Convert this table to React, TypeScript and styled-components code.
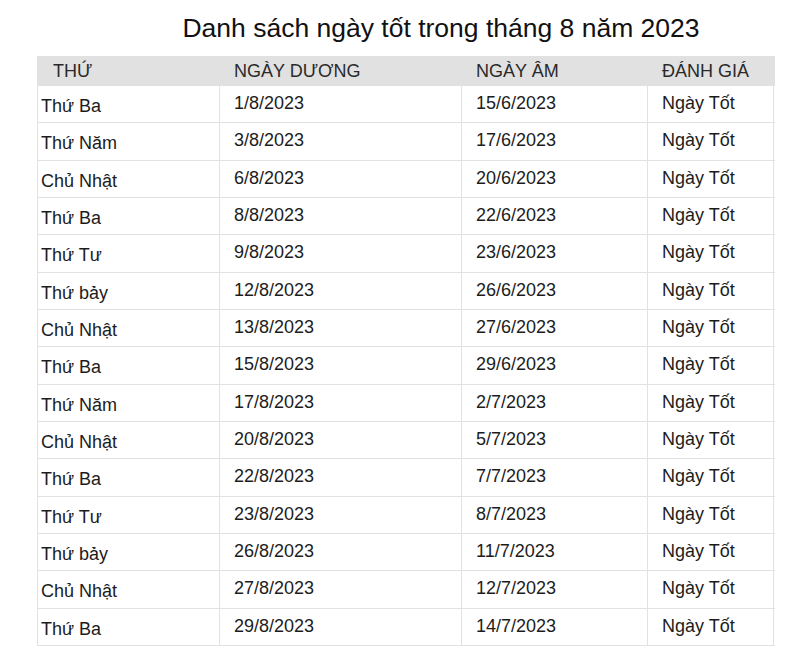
import React from "react";
import styled, { createGlobalStyle } from "styled-components";

const Global = createGlobalStyle`
  html, body { margin: 0; padding: 0; background: #ffffff; }
  body { font-family: "Liberation Sans", Arial, sans-serif; color: #1c1c1c; }
`;

const Page = styled.div`
  width: 800px;
  height: 659px;
  padding-top: 13px;
  box-sizing: border-box;
  overflow: hidden;
`;

const Title = styled.h1`
  margin: 0 0 12px 0;
  padding-left: 82px;
  text-align: center;
  font-weight: 400;
  font-size: 26.5px;
  line-height: 31px;
  color: #111;
`;

const Table = styled.div`
  margin-left: 37px;
  width: 737px;
  display: grid;
  grid-template-columns: 182px 242px 186px 127px;
  border-left: 1px solid #e2e2e2;
  border-right: 1px solid #e2e2e2;
  box-sizing: border-box;
`;

const Head = styled.div<{ $pad: number }>`
  height: 30px;
  background: #e1e1e1;
  padding-left: ${(p) => p.$pad}px;
  font-size: 18px;
  line-height: 31px;
  color: #2a2a2a;
  white-space: nowrap;
`;

const Row = styled.div`
  display: contents;
`;

const Cell = styled.div<{ $first?: boolean; $last?: boolean }>`
  height: 37.33px;
  box-sizing: border-box;
  border-bottom: 1px solid #e2e2e2;
  border-right: ${(p) => (p.$last ? "none" : "1px solid #e2e2e2")};
  padding-left: ${(p) => (p.$first ? 3 : 14)}px;
  padding-top: ${(p) => (p.$first ? 10 : 7)}px;
  font-size: 18px;
  line-height: 20px;
  white-space: nowrap;
  color: #1c1c1c;
`;

const rows: [string, string, string][] = [
  ["Thứ Ba", "1/8/2023", "15/6/2023"],
  ["Thứ Năm", "3/8/2023", "17/6/2023"],
  ["Chủ Nhật", "6/8/2023", "20/6/2023"],
  ["Thứ Ba", "8/8/2023", "22/6/2023"],
  ["Thứ Tư", "9/8/2023", "23/6/2023"],
  ["Thứ bảy", "12/8/2023", "26/6/2023"],
  ["Chủ Nhật", "13/8/2023", "27/6/2023"],
  ["Thứ Ba", "15/8/2023", "29/6/2023"],
  ["Thứ Năm", "17/8/2023", "2/7/2023"],
  ["Chủ Nhật", "20/8/2023", "5/7/2023"],
  ["Thứ Ba", "22/8/2023", "7/7/2023"],
  ["Thứ Tư", "23/8/2023", "8/7/2023"],
  ["Thứ bảy", "26/8/2023", "11/7/2023"],
  ["Chủ Nhật", "27/8/2023", "12/7/2023"],
  ["Thứ Ba", "29/8/2023", "14/7/2023"],
];

export default function App() {
  return (
    <Page>
      <Global />
      <Title>Danh sách ngày tốt trong tháng 8 năm 2023</Title>
      <Table>
        <Head $pad={15}>THỨ</Head>
        <Head $pad={14}>NGÀY DƯƠNG</Head>
        <Head $pad={14}>NGÀY ÂM</Head>
        <Head $pad={14}>ĐÁNH GIÁ</Head>
        {rows.map((r, i) => (
          <Row key={i}>
            <Cell $first>{r[0]}</Cell>
            <Cell>{r[1]}</Cell>
            <Cell>{r[2]}</Cell>
            <Cell $last>Ngày Tốt</Cell>
          </Row>
        ))}
      </Table>
    </Page>
  );
}
